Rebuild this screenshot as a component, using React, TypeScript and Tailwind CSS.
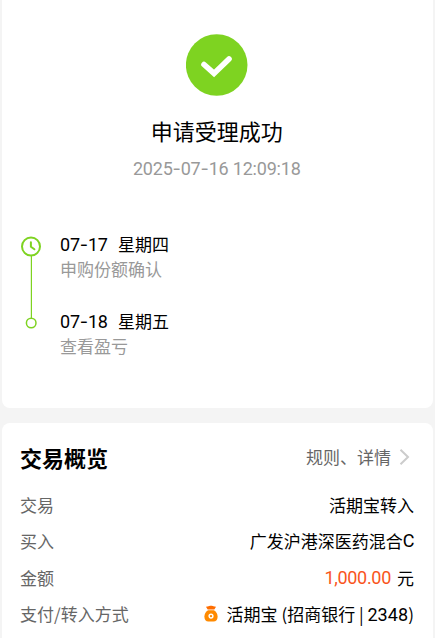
import { Fragment, type ReactNode } from 'react';

function Num({ children, className = '' }: { children: string; className?: string }) {
  const parts = children.split('-');
  return (
    <span className={`font-['Roboto','Noto_Sans_CJK_SC',sans-serif] text-[18px] ${className}`}>
      {parts.map((part, i) => (
        <Fragment key={i}>
          {i > 0 && <span className="font-['Inter',sans-serif]">-</span>}
          {part}
        </Fragment>
      ))}
    </span>
  );
}

function SuccessIcon() {
  return (
    <svg className="h-[62px] w-[62px]" viewBox="0 0 62 62" fill="none">
      <circle cx="30.7" cy="31" r="30.8" fill="#7ed321" />
      <path d="M18 30.5L28 39.4L43 24.9" stroke="#fff" strokeWidth="5.6" strokeLinecap="round" strokeLinejoin="miter" />
    </svg>
  );
}

function Timeline() {
  return (
    <svg className="h-[98px] w-[22px] shrink-0" viewBox="0 0 22 98" fill="none" stroke="#7ed321">
      <circle cx="11" cy="11.5" r="9" strokeWidth="2" />
      <path d="M10.9 7.3V11.8L14.4 14.3" strokeWidth="2" strokeLinecap="round" strokeLinejoin="round" />
      <path d="M11.4 21V83" strokeWidth="1.2" />
      <circle cx="11.2" cy="88" r="4.8" strokeWidth="1.5" />
    </svg>
  );
}

function MoneyBag() {
  return (
    <svg className="h-[18px] w-[14px]" viewBox="0 0 14 18" fill="none">
      <path d="M3 1.4C4.3 1.9 5.4.8 7 .8s2.7 1.1 4 .6c.6 0 1 .6.6 1.1L10.3 4.5H3.7L2.4 2.5c-.4-.5 0-1.1.6-1.1Z" fill="#ff6d00" />
      <path d="M4 5.3h6c2.3 1.5 3.6 3.8 3.6 6.3 0 3.2-1.5 5-4 5H4.4c-2.5 0-4-1.8-4-5 0-2.5 1.3-4.8 3.6-6.3Z" fill="#ff8a00" />
      <circle cx="7" cy="11.1" r="1.9" stroke="#fff" strokeWidth="1.4" />
    </svg>
  );
}

function Step({ date, day, note }: { date: string; day: string; note: string }) {
  return (
    <div className="h-[77px]">
      <div className="flex h-[26px] items-center text-black">
        <Num className="w-[58px] pt-[2px] tracking-[-0.2px]">{date}</Num>
        <span>{day}</span>
      </div>
      <div className="-mt-px flex h-[26px] items-center text-[#999]">{note}</div>
    </div>
  );
}

function Row({ label, children }: { label: string; children: ReactNode }) {
  return (
    <div className="flex h-[36.3px] items-center justify-between">
      <span className="text-[#666]">{label}</span>
      <div className="flex items-center text-black">{children}</div>
    </div>
  );
}

export default function App() {
  return (
    <div className="flex h-[638px] w-[435px] flex-col gap-[15px] overflow-hidden bg-[#f4f4f4] pr-[2px] pl-[1.5px] font-['Noto_Sans_CJK_SC',sans-serif] text-[17px] leading-[26px] whitespace-nowrap">
      <section className="flex h-[408px] shrink-0 flex-col rounded-b-[8px] bg-white pt-[34px]">
        <div className="flex flex-col items-center">
          <SuccessIcon />
          <h1 className="mt-[18px] mr-[1px] text-[22px] leading-[32px] text-black">申请受理成功</h1>
          <Num className="mt-[10px] mr-[1px] tracking-[-0.2px] text-[#999]">2025-07-16 12:09:18</Num>
        </div>
        <div className="mt-[49px] flex gap-[18px] pl-[18.5px]">
          <div className="pt-[4px]">
            <Timeline />
          </div>
          <div>
            <Step date="07-17" day="星期四" note="申购份额确认" />
            <Step date="07-18" day="星期五" note="查看盈亏" />
          </div>
        </div>
      </section>
      <section className="h-[240px] shrink-0 rounded-t-[8px] bg-white pt-[16px] pr-[19px] pl-[18.5px]">
        <div className="mb-[12px] flex h-[36px] items-center justify-between">
          <h2 className="text-[22px] font-bold text-black">交易概览</h2>
          <div className="flex items-center text-[#666]">
            <span>规则、详情</span>
            <svg className="mr-[4px] ml-[8px] h-[18px] w-[11px]" viewBox="0 0 11 18" fill="none" stroke="#ccc" strokeWidth="2">
              <path d="M1.5 1.8L9 9L1.5 16.2" />
            </svg>
          </div>
        </div>
        <Row label="交易">活期宝转入</Row>
        <Row label="买入">
          广发沪港深医药混合<Num className="tracking-[-0.5px]">C</Num>
        </Row>
        <Row label="金额">
          <Num className="mr-[6px] tracking-[-0.3px] text-[#f9541c]">1,000.00</Num>元
        </Row>
        <Row label="支付/转入方式">
          <MoneyBag />
          <span className="ml-[9px]">活期宝 (招商银行 | <Num className="tracking-[0.1px]">2348</Num>)</span>
        </Row>
      </section>
    </div>
  );
}
